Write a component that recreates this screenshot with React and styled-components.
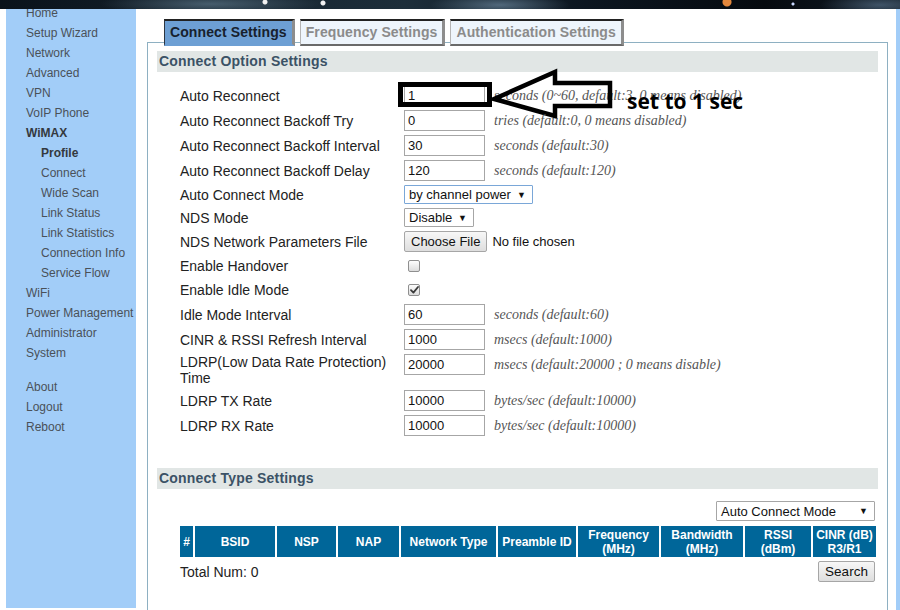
import React from 'react';
import styled, { createGlobalStyle } from 'styled-components';

const GlobalStyle = createGlobalStyle`
  html, body {
    margin: 0;
    padding: 0;
    width: 900px;
    height: 610px;
    overflow: hidden;
    background: #ffffff;
  }
  body {
    font-family: "Liberation Sans", Arial, sans-serif;
  }
  * { box-sizing: border-box; }
`;

const SANS = '"Liberation Sans", Arial, sans-serif';
const SERIF = '"Liberation Serif", "Times New Roman", serif';

const Page = styled.div`
  width: 900px;
  height: 610px;
  overflow: hidden;
  display: flex;
  flex-direction: column;
  background: #fff;
`;

/* starry header strip at the top of the router UI */
const Banner = styled.div`
  flex: 0 0 9px;
  position: relative;
  z-index: 2;
  background:
    radial-gradient(circle at 727px 2px, #e3873c 0 4px, transparent 5px),
    radial-gradient(circle at 265px 2px, #f2f2f2 0 2px, transparent 3px),
    radial-gradient(circle at 323px 3px, #f2f2f2 0 2px, transparent 3px),
    radial-gradient(circle at 793px 4px, #c8d8ff 0 1px, transparent 2px),
    radial-gradient(ellipse 110px 12px at 210px 4px, rgba(110, 140, 160, 0.55), transparent),
    radial-gradient(ellipse 70px 12px at 500px 5px, rgba(120, 150, 175, 0.6), transparent),
    radial-gradient(ellipse 60px 12px at 880px 5px, rgba(110, 140, 170, 0.5), transparent),
    linear-gradient(90deg, #0a121a 0%, #16242f 25%, #1d2e3a 45%, #0c1620 65%, #060a0f 85%, #111c26 100%);
`;

const Body = styled.div`
  flex: 1;
  display: flex;
  margin-top: -6px;
  min-height: 0;
`;

const Sidebar = styled.nav`
  flex: 0 0 130px;
  margin-left: 6px;
  height: 605px;
  background: #a2cdf8;
`;

const NavItem = styled.div`
  height: 20px;
  font-family: ${SANS};
  font-size: 12px;
  line-height: 20px;
  white-space: nowrap;
  padding-left: ${(p) => (p.$sub ? 35 : 20)}px;
  margin-top: ${(p) => (p.$gap ? 14 : 0)}px;
  font-weight: ${(p) => (p.$bold ? 700 : 400)};
  color: ${(p) => (p.$bold ? '#34393f' : '#4a5158')};
`;

const Main = styled.main`
  flex: 1;
  min-width: 0;
  display: flex;
  flex-direction: column;
  padding: 16px 8px 0 11px;
`;

const RightStrip = styled.div`
  flex: 0 0 4px;
  background: #a2cdf8;
`;

const TabBar = styled.div`
  display: flex;
  gap: 5px;
  padding-left: 17px;
  position: relative;
  z-index: 1;
`;

const Tab = styled.div`
  height: 27px;
  padding: 0 5px 0 5px;
  font-family: ${SANS};
  font-weight: 700;
  font-size: 14px;
  line-height: 23px;
  letter-spacing: 0.1px;
  white-space: nowrap;
  background: ${(p) => (p.$active ? '#6d9fd4' : '#eef5fc')};
  color: ${(p) => (p.$active ? '#17212d' : '#8b8b8b')};
  border-top: 2px solid #222;
  border-left: 1px solid ${(p) => (p.$active ? '#2d3540' : '#b5b5b5')};
  border-right: 3px solid #8d8d8d;
  border-bottom: 2px solid ${(p) => (p.$active ? '#6d9fd4' : '#6a6a6a')};
`;

const Panel = styled.section`
  flex: 1;
  margin-top: -4px;
  border: 1px solid #8eb0c2;
  border-bottom: none;
  padding: 8px 9px 0 9px;
`;

const SectionHeader = styled.div`
  height: 21px;
  line-height: 20px;
  padding-left: 2px;
  background: #e1e6e5;
  font-family: ${SANS};
  font-weight: 700;
  font-size: 14px;
  letter-spacing: 0.2px;
  color: #3b5266;
  margin-top: ${(p) => p.$top || 0}px;
`;

const FormList = styled.div`
  margin-top: 11px;
  padding-left: 23px;
`;

const Row = styled.div`
  position: relative;
  display: flex;
  align-items: ${(p) => (p.$top ? 'flex-start' : 'center')};
  padding: 2px 0;
`;

const Label = styled.div`
  flex: 0 0 224px;
  padding-right: 8px;
  font-family: ${SANS};
  font-size: 14px;
  line-height: 16px;
  color: #222;
`;

const TextInput = styled.input`
  width: 81px;
  height: 21px;
  padding: 1px 3px;
  border: 1px solid #a6a6a6;
  border-radius: 0;
  font-family: ${SANS};
  font-size: 13px;
  color: #111;
  background: #fff;
  outline: none;
`;

const Hint = styled.span`
  margin-left: 9px;
  font-family: ${SERIF};
  font-style: italic;
  font-size: 14px;
  line-height: 21px;
  color: #555;
  white-space: nowrap;
`;

const SelectBox = styled.div`
  display: inline-flex;
  align-items: center;
  height: ${(p) => p.$h || 19}px;
  width: ${(p) => p.$w}px;
  padding: 0 6px 0 4px;
  border: 1px solid ${(p) => (p.$focus ? '#7aa7d8' : '#a6a6a6')};
  border-radius: 1px;
  background: #fff;
  font-family: ${SANS};
  font-size: 13px;
  color: #111;
  white-space: nowrap;
`;

const Caret = styled.span`
  margin-left: auto;
  font-size: 9px;
  color: #111;
`;

const FileButton = styled.button`
  height: 21px;
  padding: 0 6px;
  border: 1px solid #a6a6a6;
  border-radius: 2px;
  background: linear-gradient(#f7f7f7, #dedede);
  font-family: ${SANS};
  font-size: 13px;
  color: #111;
`;

const FileNote = styled.span`
  margin-left: 5px;
  font-family: ${SANS};
  font-size: 13px;
  color: #111;
`;

const CheckCell = styled.div`
  height: 20px;
  display: flex;
  align-items: center;
`;

const CheckBox = styled.span`
  display: inline-flex;
  align-items: center;
  justify-content: center;
  width: 12px;
  height: 12px;
  margin-left: 4px;
  border: 1px solid #8f8f8f;
  border-radius: 2px;
  background: linear-gradient(#fdfdfd, #dcdcdc);
`;

/* hand-drawn callout over the first field */
const MarkBox = styled.div`
  position: absolute;
  left: 218px;
  top: -1px;
  width: 94px;
  height: 25px;
  border: 5px solid #000;
  pointer-events: none;
`;

const MarkArrow = styled.svg`
  position: absolute;
  left: 310px;
  top: -15px;
  overflow: visible;
  pointer-events: none;
`;

const MarkText = styled.div`
  position: absolute;
  left: 447px;
  top: 3px;
  font-family: "Open Sans", "Noto Sans", sans-serif;
  font-weight: 700;
  font-size: 21px;
  line-height: 30px;
  color: #000;
  white-space: nowrap;
  pointer-events: none;
`;

const ToolRow = styled.div`
  display: flex;
  justify-content: flex-end;
  margin-top: 12px;
  padding-right: 3px;
`;

const HeadGrid = styled.div`
  display: grid;
  grid-template-columns: 13px 80px 59px 61px 95px 78px 81px 82px 66px 63px;
  column-gap: 2px;
  margin: 5px 0 0 23px;
`;

const HeadCell = styled.div`
  height: 31px;
  display: flex;
  align-items: center;
  justify-content: center;
  text-align: center;
  background: #006699;
  color: #fff;
  font-family: ${SANS};
  font-weight: 700;
  font-size: 12px;
  line-height: 14px;
  white-space: nowrap;
`;

const Footer = styled.div`
  display: flex;
  align-items: center;
  justify-content: space-between;
  margin: 4px 3px 0 23px;
`;

const TotalText = styled.span`
  font-family: ${SANS};
  font-size: 14px;
  color: #222;
`;

const PlainButton = styled.button`
  height: 21px;
  width: 57px;
  padding: 0;
  border: 1px solid #a6a6a6;
  border-radius: 2px;
  background: linear-gradient(#f7f7f7, #dedede);
  font-family: ${SANS};
  font-size: 13.5px;
  color: #111;
`;

const navItems = [
  { t: 'Home' },
  { t: 'Setup Wizard' },
  { t: 'Network' },
  { t: 'Advanced' },
  { t: 'VPN' },
  { t: 'VoIP Phone' },
  { t: 'WiMAX', bold: true },
  { t: 'Profile', sub: true, bold: true },
  { t: 'Connect', sub: true },
  { t: 'Wide Scan', sub: true },
  { t: 'Link Status', sub: true },
  { t: 'Link Statistics', sub: true },
  { t: 'Connection Info', sub: true },
  { t: 'Service Flow', sub: true },
  { t: 'WiFi' },
  { t: 'Power Management' },
  { t: 'Administrator' },
  { t: 'System' },
  { t: 'About', gap: true },
  { t: 'Logout' },
  { t: 'Reboot' },
];

const options = [
  { label: 'Auto Reconnect', kind: 'input', value: '1', hint: 'seconds (0~60, default:3, 0 means disabled)', mark: true },
  { label: 'Auto Reconnect Backoff Try', kind: 'input', value: '0', hint: 'tries (default:0, 0 means disabled)' },
  { label: 'Auto Reconnect Backoff Interval', kind: 'input', value: '30', hint: 'seconds (default:30)' },
  { label: 'Auto Reconnect Backoff Delay', kind: 'input', value: '120', hint: 'seconds (default:120)' },
  { label: 'Auto Connect Mode', kind: 'select', value: 'by channel power', width: 129, focus: true },
  { label: 'NDS Mode', kind: 'select', value: 'Disable', width: 70 },
  { label: 'NDS Network Parameters File', kind: 'file' },
  { label: 'Enable Handover', kind: 'check', checked: false },
  { label: 'Enable Idle Mode', kind: 'check', checked: true },
  { label: 'Idle Mode Interval', kind: 'input', value: '60', hint: 'seconds (default:60)' },
  { label: 'CINR & RSSI Refresh Interval', kind: 'input', value: '1000', hint: 'msecs (default:1000)' },
  { label: 'LDRP(Low Data Rate Protection) Time', kind: 'input', value: '20000', hint: 'msecs (default:20000 ; 0 means disable)', top: true },
  { label: 'LDRP TX Rate', kind: 'input', value: '10000', hint: 'bytes/sec (default:10000)' },
  { label: 'LDRP RX Rate', kind: 'input', value: '10000', hint: 'bytes/sec (default:10000)' },
];

const columns = [
  ['#'],
  ['BSID'],
  ['NSP'],
  ['NAP'],
  ['Network Type'],
  ['Preamble ID'],
  ['Frequency', '(MHz)'],
  ['Bandwidth', '(MHz)'],
  ['RSSI', '(dBm)'],
  ['CINR (dB)', 'R3/R1'],
];

function CheckMark() {
  return (
    <svg width="9" height="8" viewBox="0 0 9 8">
      <path d="M1 4.2 L3.4 6.6 L8 1" fill="none" stroke="#3a3a3a" strokeWidth="1.8" strokeLinecap="round" strokeLinejoin="round" />
    </svg>
  );
}

function Callout() {
  return (
    <>
      <MarkBox />
      <MarkArrow width="124" height="54" viewBox="0 0 124 54">
        <path
          d="M4 31 L65 4 L65 15 L120 15 L120 38 L65 38 L65 48 Z"
          fill="none"
          stroke="#000"
          strokeWidth="4.5"
          strokeLinejoin="miter"
        />
      </MarkArrow>
      <MarkText>set to 1 sec</MarkText>
    </>
  );
}

function Control({ item }) {
  switch (item.kind) {
    case 'input':
      return (
        <>
          <TextInput defaultValue={item.value} />
          <Hint>{item.hint}</Hint>
        </>
      );
    case 'select':
      return (
        <SelectBox $w={item.width} $focus={item.focus}>
          {item.value}
          <Caret>▼</Caret>
        </SelectBox>
      );
    case 'file':
      return (
        <>
          <FileButton>Choose File</FileButton>
          <FileNote>No file chosen</FileNote>
        </>
      );
    case 'check':
      return (
        <CheckCell>
          <CheckBox>{item.checked && <CheckMark />}</CheckBox>
        </CheckCell>
      );
    default:
      return null;
  }
}

export default function App() {
  return (
    <>
      <GlobalStyle />
      <Page>
        <Banner />
        <Body>
          <Sidebar>
            {navItems.map((n) => (
              <NavItem key={n.t} $sub={n.sub} $bold={n.bold} $gap={n.gap}>
                {n.t}
              </NavItem>
            ))}
          </Sidebar>
          <Main>
            <TabBar>
              <Tab $active>Connect Settings</Tab>
              <Tab>Frequency Settings</Tab>
              <Tab>Authentication Settings</Tab>
            </TabBar>
            <Panel>
              <SectionHeader>Connect Option Settings</SectionHeader>
              <FormList>
                {options.map((item) => (
                  <Row key={item.label} $top={item.top}>
                    <Label>{item.label}</Label>
                    <Control item={item} />
                    {item.mark && <Callout />}
                  </Row>
                ))}
              </FormList>

              <SectionHeader $top={30}>Connect Type Settings</SectionHeader>
              <ToolRow>
                <SelectBox $w={159} $h={20}>
                  Auto Connect Mode
                  <Caret>▼</Caret>
                </SelectBox>
              </ToolRow>
              <HeadGrid>
                {columns.map((c) => (
                  <HeadCell key={c.join(' ')}>
                    {c.length > 1 ? (
                      <span>
                        {c[0]}
                        <br />
                        {c[1]}
                      </span>
                    ) : (
                      c[0]
                    )}
                  </HeadCell>
                ))}
              </HeadGrid>
              <Footer>
                <TotalText>Total Num: 0</TotalText>
                <PlainButton>Search</PlainButton>
              </Footer>
            </Panel>
          </Main>
          <RightStrip />
        </Body>
      </Page>
    </>
  );
}
